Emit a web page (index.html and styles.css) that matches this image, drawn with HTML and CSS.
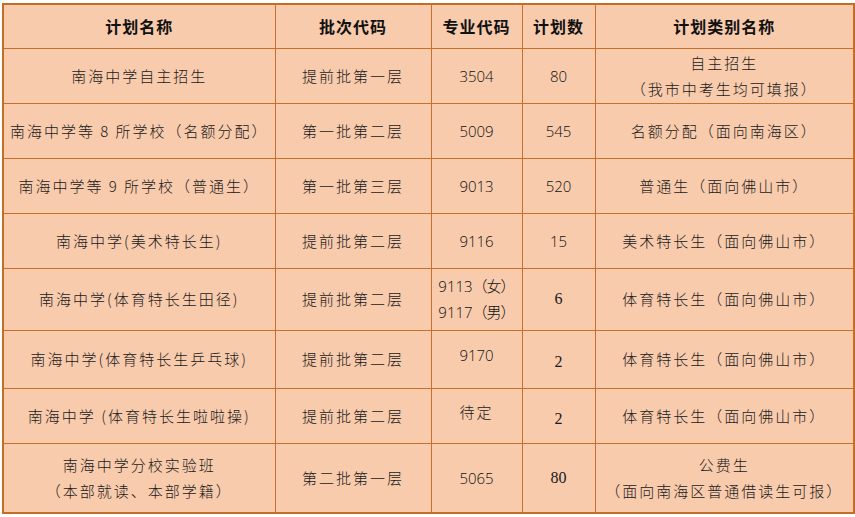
FILE: index.html
```html
<!DOCTYPE html>
<html lang="zh-CN">
<head>
<meta charset="utf-8">
<link rel="stylesheet" href="styles.css">
</head>
<body>
<table class="plan">
  <colgroup>
    <col class="c1"><col class="c2"><col class="c3"><col class="c4"><col class="c5">
  </colgroup>
  <thead>
    <tr class="head"><th>计划名称</th><th>批次代码</th><th>专业代码</th><th>计划数</th><th>计划类别名称</th></tr>
  </thead>
  <tbody>
    <tr class="r55"><td>南海中学自主招生</td><td>提前批第一层</td><td class="num">3504</td><td class="num">80</td><td>自主招生<br>（我市中考生均可填报）</td></tr>
    <tr class="r55"><td>南海中学等 8 所学校（名额分配）</td><td>第一批第二层</td><td class="num">5009</td><td class="num">545</td><td>名额分配（面向南海区）</td></tr>
    <tr class="r55"><td>南海中学等 9 所学校（普通生）</td><td>第一批第三层</td><td class="num">9013</td><td class="num">520</td><td>普通生（面向佛山市）</td></tr>
    <tr class="r55"><td>南海中学(美术特长生)</td><td>提前批第二层</td><td class="num">9116</td><td class="num">15</td><td>美术特长生（面向佛山市）</td></tr>
    <tr class="r62"><td>南海中学(体育特长生田径)</td><td>提前批第二层</td><td class="num">9113<span class="cj">（女）</span><br>9117<span class="cj">（男）</span></td><td class="serif">6</td><td>体育特长生（面向佛山市）</td></tr>
    <tr class="r58"><td>南海中学(体育特长生乒乓球)</td><td>提前批第二层</td><td class="num up">9170</td><td class="serif down">2</td><td>体育特长生（面向佛山市）</td></tr>
    <tr class="r55"><td>南海中学 (体育特长生啦啦操)</td><td>提前批第二层</td><td class="up">待定</td><td class="serif down">2</td><td>体育特长生（面向佛山市）</td></tr>
    <tr class="r70"><td>南海中学分校实验班<br>（本部就读、本部学籍）</td><td>第二批第一层</td><td class="num">5065</td><td class="serif">80</td><td>公费生<br>（面向南海区普通借读生可报）</td></tr>
  </tbody>
</table>
</body>
</html>
```

FILE: styles.css
```css
html, body {
  margin: 0;
  padding: 0;
  background: #ffffff;
}
body {
  padding: 3px 2px 0 2px;
}
.plan {
  border-collapse: collapse;
  table-layout: fixed;
  width: 851px;
  background: #f8cbad;
  border: 2px solid #c46d24;
  font-family: "Noto Sans CJK SC", "Noto Sans", sans-serif;
  font-weight: 300;
  color: #1a1a1a;
}
.c1 { width: 272px; }
.c2 { width: 156px; }
.c3 { width: 91px; }
.c4 { width: 73px; }
.c5 { width: 259px; }
.plan th, .plan td {
  border: 1px solid #c8702a;
  text-align: center;
  vertical-align: middle;
  padding: 0;
}
.plan th {
  font-size: 16px;
  font-weight: 700;
  letter-spacing: 1px;
  color: #111;
}
.plan td {
  font-size: 15px;
  letter-spacing: 2px;
  line-height: 26px;
}
.head { height: 44px; }
.r55 { height: 55px; }
.r58 { height: 58px; }
.r62 { height: 62px; }
.r70 { height: 70px; }
.plan td.num {
  font-family: "Open Sans", "Noto Sans CJK SC", sans-serif;
  font-weight: 300;
  letter-spacing: 0;
  font-size: 15px;
  color: #111;
}
.plan td.num .cj {
  font-family: "Noto Sans CJK SC", sans-serif;
  letter-spacing: -1px;
}
.plan td.serif {
  font-family: "Liberation Serif", serif;
  font-weight: 400;
  font-size: 16px;
  letter-spacing: 0;
}
.up { padding-bottom: 8px !important; }
.down { padding-top: 6px !important; }
```
